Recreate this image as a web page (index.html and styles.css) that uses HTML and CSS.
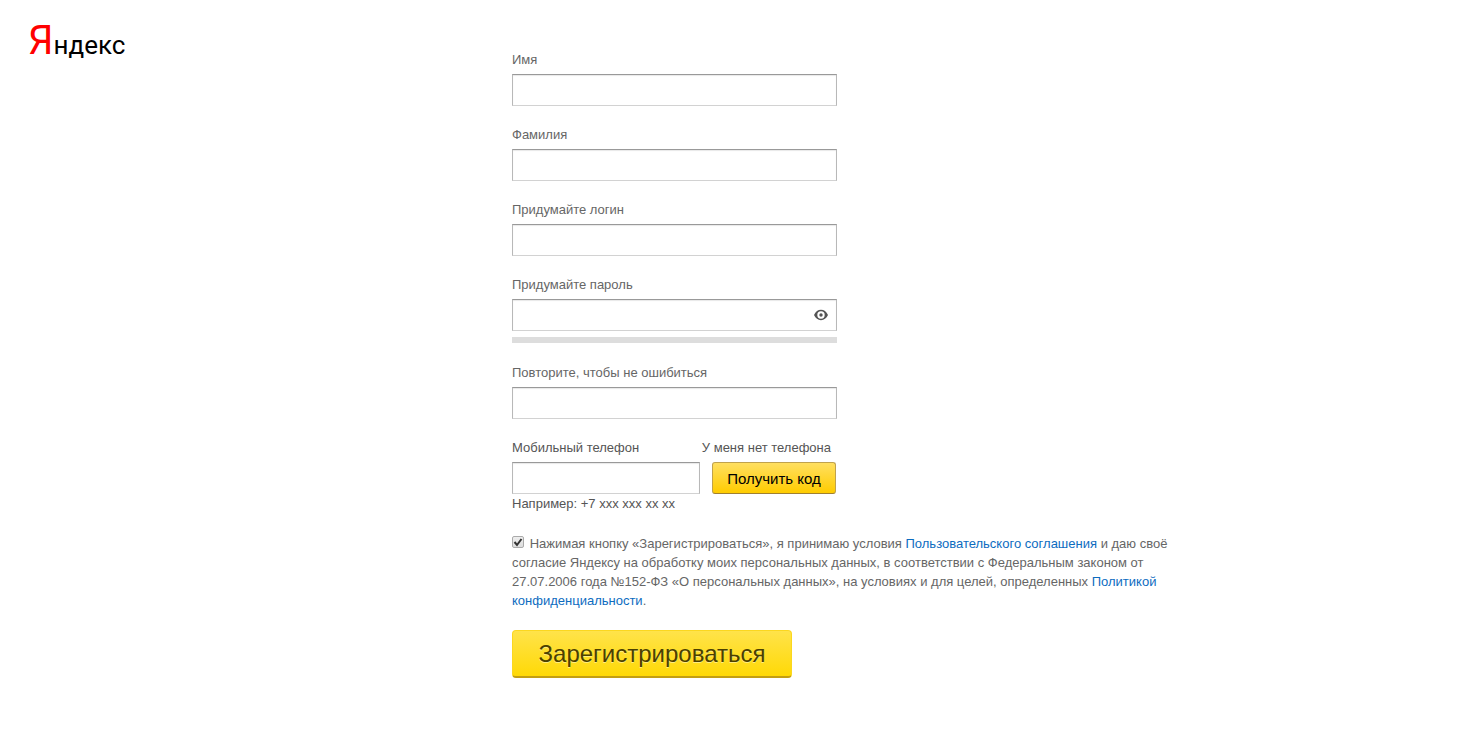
FILE: index.html
```html
<!DOCTYPE html>
<html lang="ru">
<head>
  <meta charset="UTF-8">
  <meta name="viewport" content="width=device-width, initial-scale=1.0">
  <title>Регистрация</title>
  <link rel="stylesheet" href="styles.css">
</head>
<body>
  <div class="page">
    <header class="header">
      <a class="logo" href="#"><span class="logo-first">Я</span>ндекс</a>
    </header>

    <form class="form">
      <div class="field">
        <label for="firstname">Имя</label>
        <input class="input" type="text" id="firstname">
      </div>

      <div class="field">
        <label for="lastname">Фамилия</label>
        <input class="input" type="text" id="lastname">
      </div>

      <div class="field">
        <label for="login">Придумайте логин</label>
        <input class="input" type="text" id="login">
      </div>

      <!-- Password with strength bar -->
      <div class="field">
        <label for="password">Придумайте пароль</label>
        <div class="password">
          <input class="input" type="password" id="password">
          <button class="eye" type="button" aria-label="Показать пароль">
            <svg width="14" height="12" viewBox="0 0 14 12">
              <path fill="#555" fill-rule="evenodd" d="M0 6C1.6 2.6 4 .8 7 .8s5.400 1.800 7 5.200c-1.600 3.400-4 5.200-7 5.200S1.600 9.400 0 6zM7 2.300a3.700 3.700 0 1 0 0 7.400a3.700 3.700 0 1 0 0-7.400z"/>
              <circle cx="7" cy="6" r="1.700" fill="#555"/>
            </svg>
          </button>
        </div>
        <div class="strength"></div>
      </div>

      <div class="field">
        <label for="confirm">Повторите, чтобы не ошибиться</label>
        <input class="input" type="password" id="confirm">
      </div>

      <!-- Phone -->
      <div class="field">
        <div class="phone-head">
          <label for="phone">Мобильный телефон</label>
          <button class="no-phone" type="button">У меня нет телефона</button>
        </div>
        <div class="phone-row">
          <input class="input" type="tel" id="phone">
          <button class="get-code" type="button">Получить код</button>
        </div>
        <div class="hint">Например: +7 xxx xxx xx xx</div>
      </div>

      <div class="terms">
        <input class="check" type="checkbox" id="agree" checked>
        <label for="agree">Нажимая кнопку «Зарегистрироваться», я принимаю условия <a href="#">Пользовательского соглашения</a> и даю своё согласие Яндексу на обработку моих персональных данных, в соответствии с Федеральным законом от 27.07.2006 года №152-ФЗ «О персональных данных», на условиях и для целей, определенных <a href="#">Политикой конфиденциальности</a>.</label>
      </div>

      <button class="submit" type="submit">Зарегистрироваться</button>
    </form>
  </div>
</body>
</html>
```

FILE: styles.css
```css
* {
  box-sizing: border-box;
}

body {
  margin: 0;
  background: #fff;
  color: #666;
  font: 13px/19px Arial, "Liberation Sans", sans-serif;
}

button {
  font-family: inherit;
  cursor: pointer;
}

a {
  color: #0d6cbf;
  text-decoration: none;
}

.page {
  display: grid;
  grid-template-columns: 512fr 954fr;
}

/* Logo */
.header {
  padding: 19px 0 0 28px;
}

.logo {
  font: 26px/44px Roboto, "Open Sans", sans-serif;
  color: #000;
}

.logo-first {
  color: #f00;
  font-size: 40px;
}

/* Form fields */
.form {
  padding: 50px 20px 50px 0;
}

.field {
  max-width: 325px;
  margin-bottom: 19px;
}

.field label {
  display: block;
  margin-bottom: 5px;
}

.input {
  display: block;
  width: 100%;
  height: 32px;
  padding: 0 8px;
  border: 1px solid #b8b8b8;
  border-top-color: #999;
  border-bottom-color: #d2d2d2;
  background: #fff;
  box-shadow: inset 0 1px 1px #e8e8e8;
  font: inherit;
}

.password {
  position: relative;
}

.eye {
  position: absolute;
  top: 0;
  right: 1px;
  display: flex;
  align-items: center;
  justify-content: center;
  width: 30px;
  height: 32px;
  padding: 0;
  border: 0;
  background: none;
}

.strength {
  height: 6px;
  margin: 6px 0 20px;
  background: #ddd;
}

/* Phone */
.phone-head {
  display: flex;
  justify-content: space-between;
  padding-right: 6px;
  color: #555;
}

.no-phone {
  height: 19px;
  padding: 0;
  border: 0;
  background: none;
  color: inherit;
  font-size: 13px;
  line-height: 19px;
}

.phone-row {
  display: flex;
  gap: 12px;
  padding-right: 1px;
}

.phone-row .input {
  flex: 1;
  min-width: 0;
}

.get-code {
  width: 124px;
  height: 32px;
  padding: 0;
  border: 1px solid #c0a24c;
  border-bottom-color: #a08030;
  border-radius: 3px;
  background: linear-gradient(#ffdf60, #fc0);
  color: #000;
  font-size: 15px;
}

.hint {
  color: #555;
}

/* Terms */
.terms {
  max-width: 670px;
  margin: 21px 0 20px;
}

.check {
  appearance: none;
  width: 12px;
  height: 12px;
  margin: 0 2px 0 0;
  border: 1px solid #aaa;
  border-radius: 2px;
  background: linear-gradient(#eee, #ddd);
  vertical-align: 0;
}

.check:checked {
  background: url("data:image/svg+xml,%3Csvg xmlns='http://www.w3.org/2000/svg' viewBox='0 0 10 10'%3E%3Cpath d='M1.500 5l2.500 3L8.500 2' fill='none' stroke='%23333' stroke-width='2'/%3E%3C/svg%3E"), linear-gradient(#eee, #ddd);
}

.submit {
  width: 280px;
  height: 48px;
  padding: 0;
  border: 1px solid #fbd71f;
  border-bottom: 2px solid #c39e12;
  border-radius: 4px;
  background: linear-gradient(#ffe34a, #ffd906);
  color: #4b4000;
  font-size: 24px;
  text-shadow: 0 1px 0 #ffed80;
}
```
